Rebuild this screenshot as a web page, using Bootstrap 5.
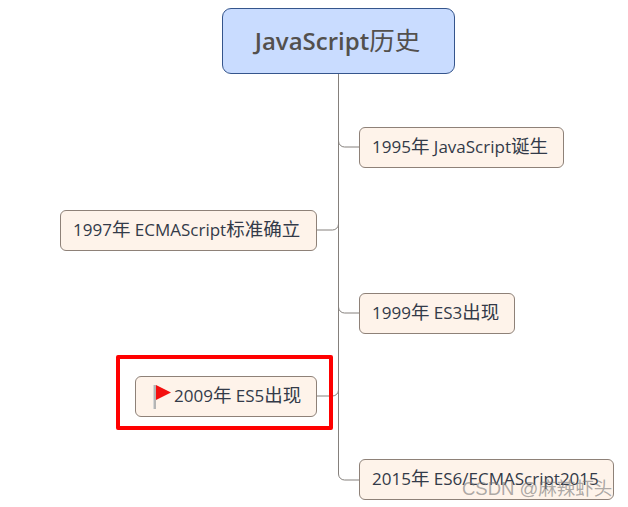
<!DOCTYPE html>
<html lang="zh">
<head>
<meta charset="utf-8">
<title>JavaScript历史</title>
<link href="https://cdn.jsdelivr.net/npm/bootstrap@5.3.0/dist/css/bootstrap.min.css" rel="stylesheet">
<style>
html,body{margin:0;background:#fff;overflow:hidden}
.mm-canvas{position:relative;width:628px;height:507px;font-family:"Open Sans","Noto Sans CJK SC",sans-serif;overflow:hidden}
.mm-lines{position:absolute;left:0;top:0}
.mm-node{position:absolute;height:41px;background:#fef3ea;border:1px solid #8e8178;border-radius:6px;color:#333a48;font-size:17px;line-height:39px;white-space:pre;padding:0 12px;display:flex;align-items:center}
.mm-node>span{margin-top:-3px}
.mm-root{position:absolute;left:222px;top:8px;width:233px;height:66px;background:#c9dcff;border:1px solid #35558c;border-radius:9px;color:#53504d;font-size:24px;font-weight:600;justify-content:center;display:flex;align-items:center;padding-right:2px;padding-bottom:2px}
.mm-root .mm-cjk{font-size:25.5px;font-weight:400}
.mm-cjk{font-size:18.5px}
.mm-n1{left:359px;top:127px;width:205px}
.mm-n2{left:60px;top:210px;width:257px}
.mm-n3{left:359px;top:293px;width:156px}
.mm-n4{left:135px;top:376px;width:182px;padding-left:16px}
.mm-n5{left:359px;top:459px;width:255px}
.mm-flag{flex:none;margin-right:1px}
.mm-mark{position:absolute;left:116px;top:355px;width:217px;height:75px;border:4px solid #f00;border-radius:2px}
.mm-wm{position:absolute;left:462px;top:477px;font-family:"Liberation Sans","Noto Sans CJK SC",sans-serif;font-size:18.5px;line-height:24px;color:rgba(120,120,120,.62);white-space:nowrap}
</style>
</head>
<body>
<div class="mm-canvas">
<svg class="mm-lines" width="628" height="507" fill="none" stroke="#85807c" stroke-width="1">
<path d="M338.5 74V474a6 6 0 0 0 6 6H359"/>
<path d="M338.5 141a6 6 0 0 0 6 6H359"/>
<path d="M338.5 307a6 6 0 0 0 6 6H359"/>
<path d="M338.5 224a6 6 0 0 1 -6 6H317"/>
<path d="M338.5 390a6 6 0 0 1 -6 6H317"/>
</svg>
<div class="mm-root"><span>JavaScript<span class="mm-cjk">历史</span></span></div>
<div class="mm-node mm-n1"><span>1995<span class="mm-cjk">年</span> JavaScript<span class="mm-cjk">诞生</span></span></div>
<div class="mm-node mm-n2"><span>1997<span class="mm-cjk">年</span> ECMAScript<span class="mm-cjk">标准确立</span></span></div>
<div class="mm-node mm-n3"><span>1999<span class="mm-cjk">年</span> ES3<span class="mm-cjk">出现</span></span></div>
<div class="mm-node mm-n4"><svg class="mm-flag" width="21" height="26" viewBox="0 0 21 26"><rect x="1" y="1" width="3" height="24" fill="#b5b5b5"/><rect x="1" y="1" width="1" height="24" fill="#d8d8d8"/><path d="M4 1 19 8.500 4 16z" fill="#f40f0f"/></svg><span>2009<span class="mm-cjk">年</span> ES5<span class="mm-cjk">出现</span></span></div>
<div class="mm-node mm-n5"><span>2015<span class="mm-cjk">年</span> ES6/ECMAScript2015</span></div>
<div class="mm-mark"></div>
<div class="mm-wm">CSDN @麻辣虾头</div>
</div>
<script src="https://cdn.jsdelivr.net/npm/bootstrap@5.3.0/dist/js/bootstrap.bundle.min.js"></script>
</body>
</html>
